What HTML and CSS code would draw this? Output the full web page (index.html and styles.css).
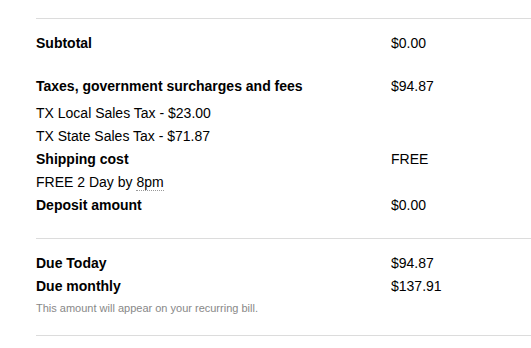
FILE: index.html
```html
<!DOCTYPE html>
<html lang="en">
<head>
  <meta charset="UTF-8" />
  <title>Order summary</title>
  <link rel="stylesheet" href="styles.css">
</head>
<body>
<div class="summary">
  <section class="block">
    <div class="row">
      <span class="label">Subtotal</span>
      <span class="value">$0.00</span>
    </div>
    <div class="row spaced">
      <span class="label">Taxes, government surcharges and fees</span>
      <span class="value">$94.87</span>
    </div>
    <div class="row first-detail">
      <span class="detail">TX Local Sales Tax - $23.00</span>
    </div>
    <div class="row">
      <span class="detail">TX State Sales Tax - $71.87</span>
    </div>
    <div class="row">
      <span class="label">Shipping cost</span>
      <span class="value">FREE</span>
    </div>
    <div class="row">
      <span class="detail">FREE 2 Day by <abbr title="8:00 PM local time">8pm</abbr></span>
    </div>
    <div class="row">
      <span class="label">Deposit amount</span>
      <span class="value">$0.00</span>
    </div>
  </section>

  <section class="block totals">
    <div class="row">
      <span class="label">Due Today</span>
      <span class="value">$94.87</span>
    </div>
    <div class="row">
      <span class="label">Due monthly</span>
      <span class="value">$137.91</span>
    </div>
    <p class="note">This amount will appear on your recurring bill.</p>
  </section>
</div>
</body>
</html>
```

FILE: styles.css
```css
body {
  margin: 0;
  background: #fff;
  font-family: "Liberation Sans", Arial, sans-serif;
  font-size: 14px;
  color: #000;
}
.summary {
  padding: 18px 0 0 36px;
}
.block {
  border-top: 1px solid #dcdcdc;
  padding: 13px 0 21px 0;
}
.totals {
  border-bottom: 1px solid #dcdcdc;
  padding-bottom: 18px;
}
.row {
  display: grid;
  grid-template-columns: 355px 1fr;
  line-height: 23px;
}
.spaced {
  margin-top: 20px;
}
.first-detail {
  margin-top: 4px;
}
.label {
  font-weight: bold;
}
abbr {
  text-decoration: none;
  border-bottom: 1px dotted #999;
}
.note {
  margin: 2px 0 0 0;
  font-size: 11px;
  line-height: 17px;
  color: #888;
}
```
